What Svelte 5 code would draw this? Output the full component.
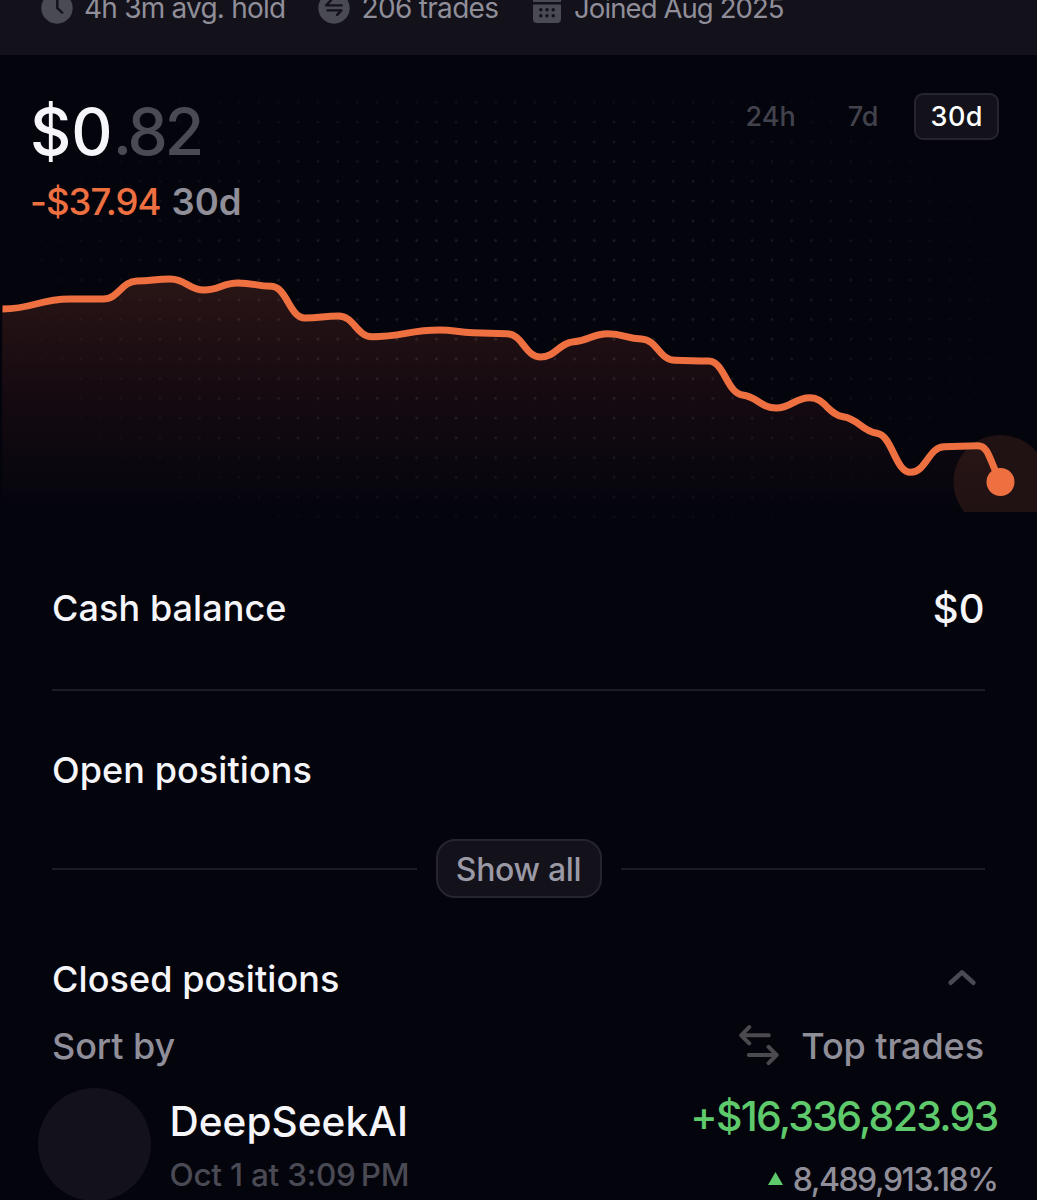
<script>
    const ranges = ['24h', '7d', '30d'];
    let activeRange = $state('30d');

    // portfolio value over the last 30 days, already in chart coordinates
    const points = [
        [2.3, 309],
        [69.6, 299],
        [103.2, 299],
        [136.9, 281],
        [170.5, 279],
        [204, 290],
        [237.8, 283],
        [271.4, 286.3],
        [305, 318],
        [338.7, 316],
        [372, 336.7],
        [439.6, 330],
        [473, 332.7],
        [507, 333.7],
        [540.6, 357],
        [574, 341.7],
        [607.8, 333.7],
        [641.5, 339],
        [675, 360.3],
        [708.7, 361],
        [742.4, 395],
        [776, 408],
        [809.7, 397.7],
        [843.3, 416.7],
        [877, 433.3],
        [910.6, 472.3],
        [944.2, 446.7],
        [978, 445.7],
        [1000.5, 482]
    ];

    // small tangent at points where the line keeps going the same way
    function slope(i) {
        if (i === 0 || i === points.length - 1) return 0;
        const [x0, y0] = points[i - 1];
        const [x1, y1] = points[i];
        const [x2, y2] = points[i + 1];
        const a = (y1 - y0) / (x1 - x0);
        const b = (y2 - y1) / (x2 - x1);
        if (a * b <= 0) return 0;
        return Math.sign(a) * Math.min(Math.abs(a), Math.abs(b)) * 0.3;
    }

    function smooth(pts) {
        let d = `M${pts[0][0]} ${pts[0][1]}`;
        for (let i = 1; i < pts.length; i++) {
            const [x0, y0] = pts[i - 1];
            const [x1, y1] = pts[i];
            const h = (x1 - x0) * 0.46;
            // the last segment runs straight into the marker
            const end = i === pts.length - 1 ? [x1 - 11, y1 - 22] : [x1 - h, y1 - h * slope(i)];
            d += ` C${x0 + h} ${y0 + h * slope(i - 1)} ${end[0]} ${end[1]} ${x1} ${y1}`;
        }
        return d;
    }

    const line = smooth(points);
    const area = `${line} V512 H2.3 Z`;
</script>

<main class="app">
    <header class="stats">
        <div class="stat">
            <svg class="round" viewBox="0 0 32 32">
                <circle cx="16" cy="16" r="15.7" />
                <path d="M16.3 5v11.2l4.9 4.4" />
            </svg>
            <span class="hold">4h 3m avg. hold</span>
        </div>
        <div class="stat">
            <svg class="round" viewBox="0 0 32 32">
                <circle cx="16" cy="16" r="15.7" />
                <path d="M13.2 8l-5 5.4h15.4M9.6 18.4h13.8l-4.3 4.4" />
            </svg>
            <span class="count">206 trades</span>
        </div>
        <div class="stat">
            <svg class="cal" viewBox="0 0 28 30">
                <path d="M0 4a4 4 0 0 1 4-4h20a4 4 0 0 1 4 4v5H0z" />
                <path d="M0 11.4h28V26a4 4 0 0 1-4 4H4a4 4 0 0 1-4-4z" />
                {#each [16.8, 22.8] as y}
                    {#each [7.8, 14, 20.2] as x}
                        <circle cx={x} cy={y} r="1.7" />
                    {/each}
                {/each}
            </svg>
            <span class="joined">Joined Aug 2025</span>
        </div>
    </header>

    <section class="hero">
        <svg class="chart" viewBox="0 55 1037 472">
            <defs>
                <pattern id="dots" x="209.4" y="92.4" width="19.74" height="19.74" patternUnits="userSpaceOnUse">
                    <circle cx="9.87" cy="9.87" r="1.5" fill="#fff" />
                </pattern>
                <radialGradient id="fade" cx="0.5" cy="0.5" r="0.5">
                    <stop offset="0" stop-color="#fff" stop-opacity="0.12" />
                    <stop offset="0.5" stop-color="#fff" stop-opacity="0.08" />
                    <stop offset="1" stop-color="#fff" stop-opacity="0" />
                </radialGradient>
                <mask id="dot-mask" maskUnits="userSpaceOnUse" x="0" y="55" width="1037" height="472">
                    <ellipse cx="510" cy="300" rx="570" ry="295" fill="url(#fade)" />
                </mask>
                <linearGradient id="area-fill" gradientUnits="userSpaceOnUse" x1="0" y1="279" x2="0" y2="510">
                    <stop offset="0" stop-color="#ee7041" stop-opacity="0.16" />
                    <stop offset="0.55" stop-color="#e0503c" stop-opacity="0.07" />
                    <stop offset="1" stop-color="#ee7041" stop-opacity="0" />
                </linearGradient>
                <clipPath id="plot">
                    <rect x="2.3" y="55" width="1035" height="457" />
                </clipPath>
            </defs>
            <path d={area} fill="url(#area-fill)" />
            <rect y="93" width="1037" height="434" fill="url(#dots)" mask="url(#dot-mask)" />
            <g clip-path="url(#plot)">
                <circle class="halo" cx="1000.5" cy="482" r="47" />
                <path class="line" d={line} />
                <circle class="marker" cx="1000.5" cy="482" r="14" />
            </g>
        </svg>

        <div class="summary">
            <div class="balance"><span class="whole">$0</span><span class="cents">.82</span></div>
            <div class="change"><span class="loss">-$37.94</span><span class="period">30d</span></div>
        </div>

        <nav class="ranges">
            {#each ranges as range}
                <button class="range" class:active={range === activeRange} onclick={() => (activeRange = range)}>
                    {range}
                </button>
            {/each}
        </nav>
    </section>

    <section class="cash">
        <h2>Cash balance</h2>
        <span class="cash-value">$0</span>
    </section>

    <section class="open">
        <h2>Open positions</h2>
        <div class="show-all">
            <button>Show all</button>
        </div>
    </section>

    <section class="closed">
        <div class="closed-head">
            <h2>Closed positions</h2>
            <svg class="chevron" viewBox="0 0 28 16">
                <path d="M2.6 12.8L14 2.4l11.4 10.4" />
            </svg>
        </div>
        <div class="sort">
            <span class="sort-label">Sort by</span>
            <div class="sort-value">
                <svg class="swap" viewBox="0 0 40 40">
                    <path d="M29.8 10.3H2.2M10.2 2.2l-8 8.1 8 8.1M9.8 30h27.8M29.6 21.9l8 8.1-8 8.1" />
                </svg>
                <span>Top trades</span>
            </div>
        </div>
    </section>

    <article class="trade">
        <div class="avatar"></div>
        <div class="info">
            <div class="name">DeepSeekAI</div>
            <div class="date">Oct 1 at 3:09&#8239;PM</div>
        </div>
        <div class="result">
            <div class="profit">+$16,336,823.93</div>
            <div class="percent">
                <svg viewBox="0 0 15 13"><path d="M7.5 0L15 13H0z" /></svg>
                <span>8,489,913.18%</span>
            </div>
        </div>
    </article>
</main>

<style>
    :global(body) {
        background: #04040d;
    }

    .app {
        height: 1200px;
        overflow: hidden;
        background: #04040d;
        color: #f6f6fa;
        font-family: 'Inter', 'Liberation Sans', sans-serif;
        font-weight: 500;
        white-space: nowrap;
    }

    svg {
        display: block;
        flex: none;
        overflow: visible;
    }

    button {
        margin: 0;
        padding: 0;
        border: 0;
        background: none;
        color: inherit;
        font: inherit;
    }

    h2 {
        margin: 0;
        font-size: 36px;
        font-weight: 500;
        line-height: 45px;
        letter-spacing: 0.08px;
    }

    /* top stats */
    .stats {
        box-sizing: border-box;
        display: flex;
        height: 55px;
        padding-left: 40.5px;
        background: #131119;
        color: #8f8e99;
        font-size: 28px;
        font-weight: 400;
    }

    .stat {
        display: flex;
        align-items: center;
        height: 16px;
        line-height: 18px;
    }

    .round {
        width: 32px;
        height: 32px;
        margin-right: 11.5px;
    }

    .round circle,
    .cal path {
        fill: #4a4a54;
    }

    .round path {
        fill: none;
        stroke: #131119;
        stroke-width: 2.4;
        stroke-linecap: round;
        stroke-linejoin: round;
    }

    .cal {
        width: 28px;
        height: 30px;
        margin-right: 13.5px;
    }

    .cal circle {
        fill: #131119;
    }

    .hold {
        width: 234px;
        letter-spacing: -0.78px;
    }

    .count {
        width: 171px;
        letter-spacing: -0.68px;
    }

    .joined {
        font-size: 27.5px;
        letter-spacing: -0.9px;
    }

    /* balance and chart */
    .hero {
        position: relative;
        box-sizing: border-box;
        display: flex;
        justify-content: space-between;
        align-items: flex-start;
        height: 472px;
        padding: 38px 38px 0 30px;
    }

    .chart {
        position: absolute;
        left: 0;
        top: 0;
        width: 1037px;
        height: 472px;
    }

    .line {
        fill: none;
        stroke: #ee7041;
        stroke-width: 7;
    }

    .marker {
        fill: #ee7041;
    }

    .halo {
        fill: #ee7041;
        opacity: 0.12;
    }

    .summary,
    .ranges {
        position: relative;
    }

    .summary {
        padding-top: 7px;
    }

    .balance {
        font-size: 64px;
        line-height: 64px;
    }

    .whole {
        letter-spacing: 0;
    }

    .cents {
        color: #4a4a54;
        letter-spacing: -3px;
    }

    .change {
        display: flex;
        gap: 11px;
        margin-top: 20px;
        font-size: 36.5px;
        line-height: 37px;
    }

    .loss {
        color: #ee7041;
        letter-spacing: -0.98px;
    }

    .period {
        color: #8f8e99;
        font-weight: 600;
        letter-spacing: 0;
    }

    .ranges {
        display: flex;
        gap: 20px;
    }

    .range {
        box-sizing: border-box;
        height: 47px;
        padding: 0 14px;
        border: 2px solid transparent;
        border-radius: 9px;
        color: #42424c;
        font-size: 27px;
        line-height: 44px;
        letter-spacing: 0;
    }

    .range.active {
        border-color: #26252e;
        background: #131119;
        color: #fff;
        letter-spacing: 0.5px;
    }

    /* cash */
    .cash {
        display: flex;
        justify-content: space-between;
        align-items: center;
        height: 162px;
        margin: 0 52px;
        border-bottom: 2px solid #1d1c26;
    }

    .cash-value {
        font-size: 40px;
        letter-spacing: 0.3px;
    }

    /* open positions */
    .open {
        margin: 0 52px;
        padding-top: 57px;
    }

    .show-all {
        display: flex;
        align-items: center;
        gap: 19px;
        margin-top: 46px;
    }

    .show-all::before,
    .show-all::after {
        content: '';
        flex: 1;
        height: 2px;
        background: #1d1c26;
    }

    .show-all button {
        box-sizing: border-box;
        width: 166px;
        height: 59px;
        padding-top: 2px;
        border: 2px solid #26252e;
        border-radius: 19px;
        background: #131119;
        color: #9a99a5;
        font-size: 32px;
        letter-spacing: -0.35px;
    }

    /* closed positions */
    .closed {
        margin: 0 52px;
        padding-top: 59px;
    }

    .closed-head,
    .sort,
    .sort-value {
        display: flex;
        align-items: center;
        justify-content: space-between;
    }

    .chevron {
        width: 28px;
        height: 16px;
        margin: 0 9.5px 4px 0;
    }

    .chevron path {
        fill: none;
        stroke: #4a4a54;
        stroke-width: 4.6;
        stroke-linecap: round;
        stroke-linejoin: round;
    }

    .sort {
        margin-top: 22px;
        color: #8f8e99;
        font-size: 36px;
        line-height: 45px;
        letter-spacing: -0.08px;
    }

    .sort-value {
        margin-right: 1px;
    }

    .swap {
        width: 40px;
        height: 40px;
        margin: 0 22px 3px 0;
    }

    .swap path {
        fill: none;
        stroke: #4b4a4e;
        stroke-width: 4;
        stroke-linecap: round;
        stroke-linejoin: round;
    }

    /* trade row */
    .trade {
        display: flex;
        margin: 19px 39.5px 0 38px;
    }

    .avatar {
        width: 113px;
        height: 113px;
        border-radius: 50%;
        background: #131119;
    }

    .info {
        flex: 1;
        padding: 9.5px 0 0 18.5px;
    }

    .name {
        font-size: 40.5px;
        line-height: 47px;
        letter-spacing: 0.05px;
    }

    .date {
        margin-top: 10px;
        color: #4a4a54;
        font-size: 31.5px;
        line-height: 40px;
        letter-spacing: -0.25px;
    }

    .result {
        display: flex;
        flex-direction: column;
        align-items: flex-end;
        padding-top: 4.5px;
    }

    .profit {
        color: #5fca6b;
        font-size: 41px;
        line-height: 46px;
        letter-spacing: -1.76px;
    }

    .percent {
        display: flex;
        align-items: center;
        gap: 10px;
        margin-top: 21px;
        color: #8f8e99;
        font-size: 32px;
        line-height: 40px;
        letter-spacing: -1.47px;
    }

    .percent svg {
        width: 15px;
        height: 13px;
        margin-bottom: 2px;
        fill: #5fca6b;
    }
</style>
